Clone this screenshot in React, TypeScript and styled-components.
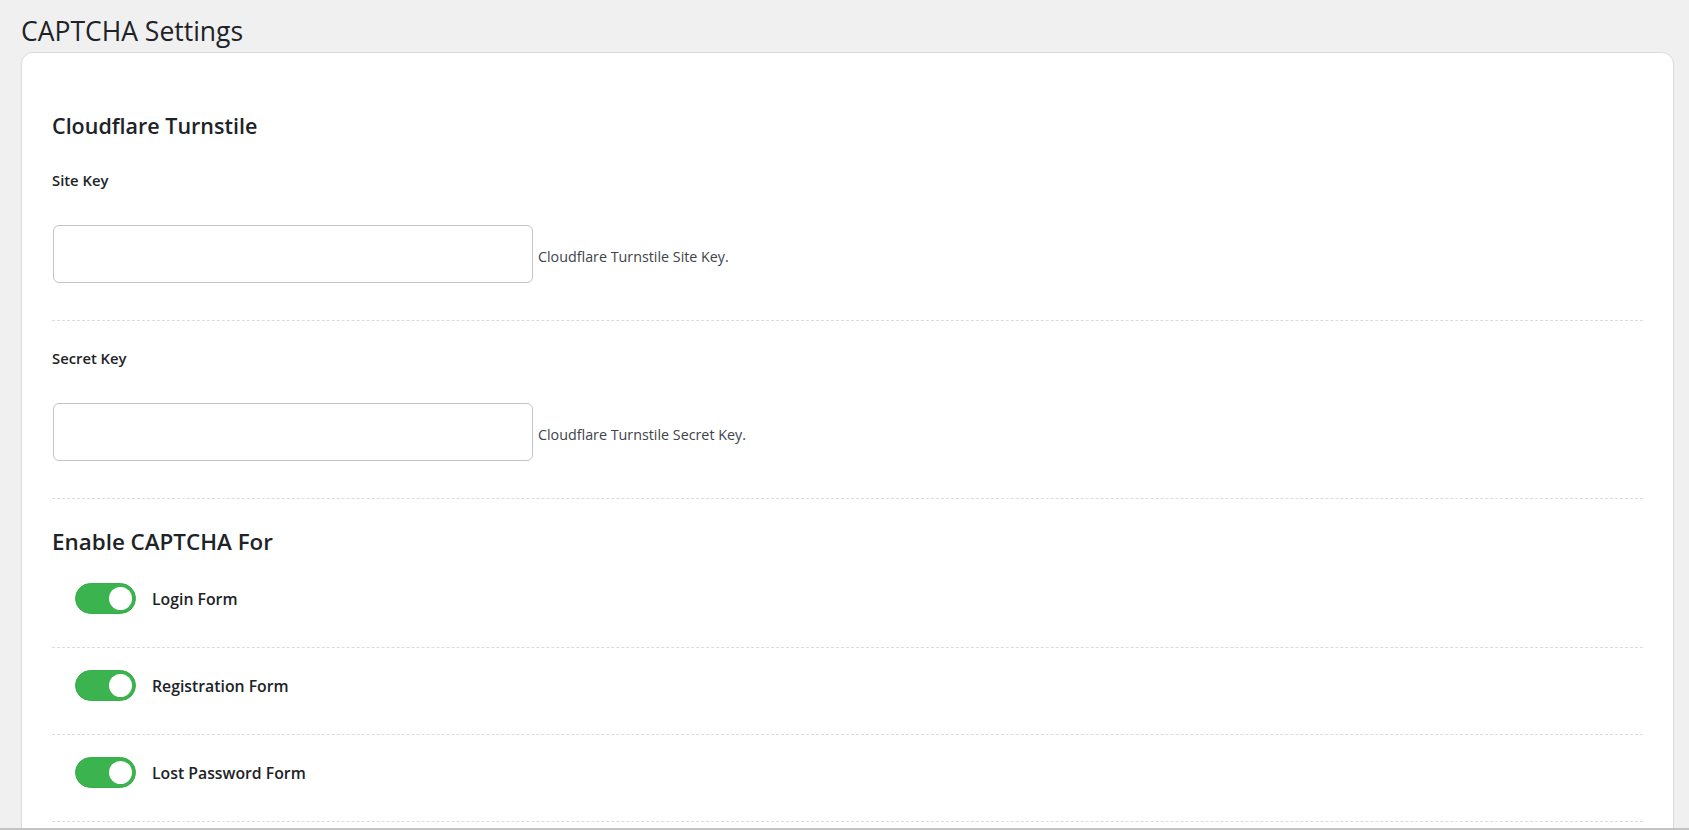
import * as React from 'react';
import styled, {createGlobalStyle} from 'styled-components';

const GlobalStyle = createGlobalStyle`
  html, body {
    margin: 0;
    padding: 0;
    background: #f0f0f1;
    font-family: "Open Sans", "Noto Sans", sans-serif;
    color: #1d2327;
  }
`;

const fields = [
    {id: 'site_key', label: 'Site Key', help: 'Cloudflare Turnstile Site Key.'},
    {id: 'secret_key', label: 'Secret Key', help: 'Cloudflare Turnstile Secret Key.'},
];

const forms = [
    {id: 'login', label: 'Login Form', on: true},
    {id: 'register', label: 'Registration Form', on: true},
    {id: 'lostpassword', label: 'Lost Password Form', on: true},
];


const Toggle = ({on, onChange}: {on: boolean, onChange: () => void}) => {
    return <Switch type="button" role="switch" aria-checked={on} $on={on} onClick={onChange}>
        <Knob $on={on}/>
    </Switch>
}


const App = () => {
    const [state, setState] = React.useState<Record<string, boolean>>(
        () => Object.fromEntries(forms.map(f => [f.id, f.on]))
    );

    return <Page>
        <GlobalStyle/>
        <PageTitle>CAPTCHA Settings</PageTitle>
        <Card>
            <SectionTitle>Cloudflare Turnstile</SectionTitle>
            {fields.map(f => (
                <FieldRow key={f.id}>
                    <FieldLabel htmlFor={f.id}>{f.label}</FieldLabel>
                    <InputLine>
                        <TextInput id={f.id} type="text"/>
                        <HelpText>{f.help}</HelpText>
                    </InputLine>
                </FieldRow>
            ))}

            <SectionTitle $top>Enable CAPTCHA For</SectionTitle>
            {forms.map(f => (
                <ToggleRow key={f.id}>
                    <Toggle on={state[f.id]} onChange={() => setState(s => ({...s, [f.id]: !s[f.id]}))}/>
                    <ToggleLabel>{f.label}</ToggleLabel>
                </ToggleRow>
            ))}
            <Spacer/>
        </Card>
        <BottomEdge/>
    </Page>
}

export default App;



const Page = styled.div`
  padding: 15px 15px 0 21px;
`;

const PageTitle = styled.h1`
  margin: 0 0 5px;
  font-size: 26.5px;
  font-weight: 400;
  line-height: 32px;
  color: #1d2327;
`;

const Card = styled.div`
  background: #fff;
  border: 1px solid #dcdcde;
  border-radius: 12px;
  box-shadow: 0 1px 2px rgba(0, 0, 0, 0.04);
  padding: 59px 30px 0 30px;
`;

const SectionTitle = styled.h2<{ $top?: boolean }>`
  margin: ${p => p.$top ? '28px' : '0'} 0 ${p => p.$top ? '4px' : '3px'};
  font-size: ${p => p.$top ? '22.4px' : '21.5px'};
  line-height: ${p => p.$top ? '30px' : '28px'};
  font-weight: 600;
  color: #1d2327;
`;

const FieldRow = styled.div`
  display: flex;
  flex-direction: column;
  gap: 35px;
  padding: 27px 0 37px;
  border-bottom: 1px dashed #dcdcde;
`;

const FieldLabel = styled.label`
  font-size: 14.8px;
  line-height: 20px;
  font-weight: 600;
  color: #1d2327;
`;

const InputLine = styled.div`
  display: flex;
  align-items: center;
  gap: 5px;
`;

const TextInput = styled.input`
  box-sizing: border-box;
  width: 480px;
  height: 58px;
  margin: 0 0 0 1px;
  padding: 0 12px;
  border: 1px solid #c3c4c7;
  border-radius: 6px;
  background: #fff;
  font: inherit;
  font-size: 14px;
  outline: none;
`;

const HelpText = styled.span`
  font-size: 14.3px;
  line-height: 20px;
  color: #3c434a;
  padding-top: 6px;
`;

const ToggleRow = styled.div`
  display: flex;
  align-items: center;
  gap: 16px;
  padding: 22px 0 33px 23px;
  border-bottom: 1px dashed #dcdcde;
`;

const Switch = styled.button<{ $on: boolean }>`
  position: relative;
  flex: none;
  width: 61px;
  height: 31px;
  padding: 0;
  border: 1px solid ${p => p.$on ? '#39ad4b' : '#c3c4c7'};
  border-radius: 16px;
  background: ${p => p.$on ? '#3bb34f' : '#dcdcde'};
  cursor: pointer;
`;

const Knob = styled.span<{ $on: boolean }>`
  position: absolute;
  top: 3px;
  left: ${p => p.$on ? '33px' : '3px'};
  width: 23px;
  height: 23px;
  border-radius: 50%;
  background: #fff;
`;

const ToggleLabel = styled.span`
  font-size: 15.8px;
  line-height: 22px;
  font-weight: 600;
  color: #1d2327;
  padding-top: 1px;
`;

const Spacer = styled.div`
  height: 60px;
`;

const BottomEdge = styled.div`
  position: fixed;
  left: 0;
  right: 0;
  bottom: 0;
  height: 2px;
  background: #c3c3c3;
`;
